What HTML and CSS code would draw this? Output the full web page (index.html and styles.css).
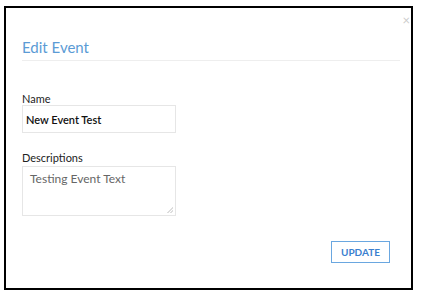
FILE: index.html
```html
<!DOCTYPE html>
<html lang="en">
<head>
  <meta charset="UTF-8">
  <title>Edit Event</title>
  <link rel="stylesheet" href="styles.css">
</head>
<body>
  <div class="frame">
    <div class="modal">
      <span class="close">&times;</span>
      <h2 class="title">Edit Event</h2>

      <label class="field">Name
        <input type="text" class="inp" value="New Event Test">
      </label>

      <label class="field">Descriptions
        <textarea class="area">Testing Event Text</textarea>
      </label>

      <div class="actions">
        <button class="btn">UPDATE</button>
      </div>
    </div>
  </div>
</body>
</html>
```

FILE: styles.css
```css
body{margin:0;background:#fff;font-family:Lato,"Open Sans",sans-serif;color:#333}
.frame{margin:6px 0 0 4px;width:405px;height:280px;border:2px solid #000;overflow:hidden;position:relative}
.modal{padding:0 11px 0 16px}
.close{position:absolute;right:1px;top:6px;font-size:13px;color:#ccc;line-height:1}
.title{margin:0;padding:30px 0 4px 0;font-size:15px;font-weight:400;color:#5b9bd5;border-bottom:1px solid #eee;line-height:18px}
.field{display:block;font-size:11px;color:#222;line-height:13px}
.field:first-of-type{margin-top:31px}
.field+.field{margin-top:18px}
.inp{display:block;box-sizing:border-box;width:154px;height:28px;margin-top:0;padding:0 3px;border:1px solid #e6e6e6;font:600 11px Lato,sans-serif;color:#111;outline:none}
.area{display:block;box-sizing:border-box;width:154px;height:50px;margin-top:2px;padding:4px 7px;border:1px solid #e6e6e6;font:12px Lato,sans-serif;color:#666;resize:none;outline:none;background:linear-gradient(135deg,transparent 50%,#ddd 50%,#ddd 60%,transparent 60%,transparent 75%,#ddd 75%,#ddd 85%,transparent 85%) no-repeat right 2px bottom 2px/6px 6px}
.actions{display:flex;justify-content:flex-end;padding:25px 10px 0 0}
.btn{width:59px;height:22px;padding:0;border:1px solid #6aa7e0;background:#fff;color:#3a7fcf;font:700 10px Lato,sans-serif}
```
